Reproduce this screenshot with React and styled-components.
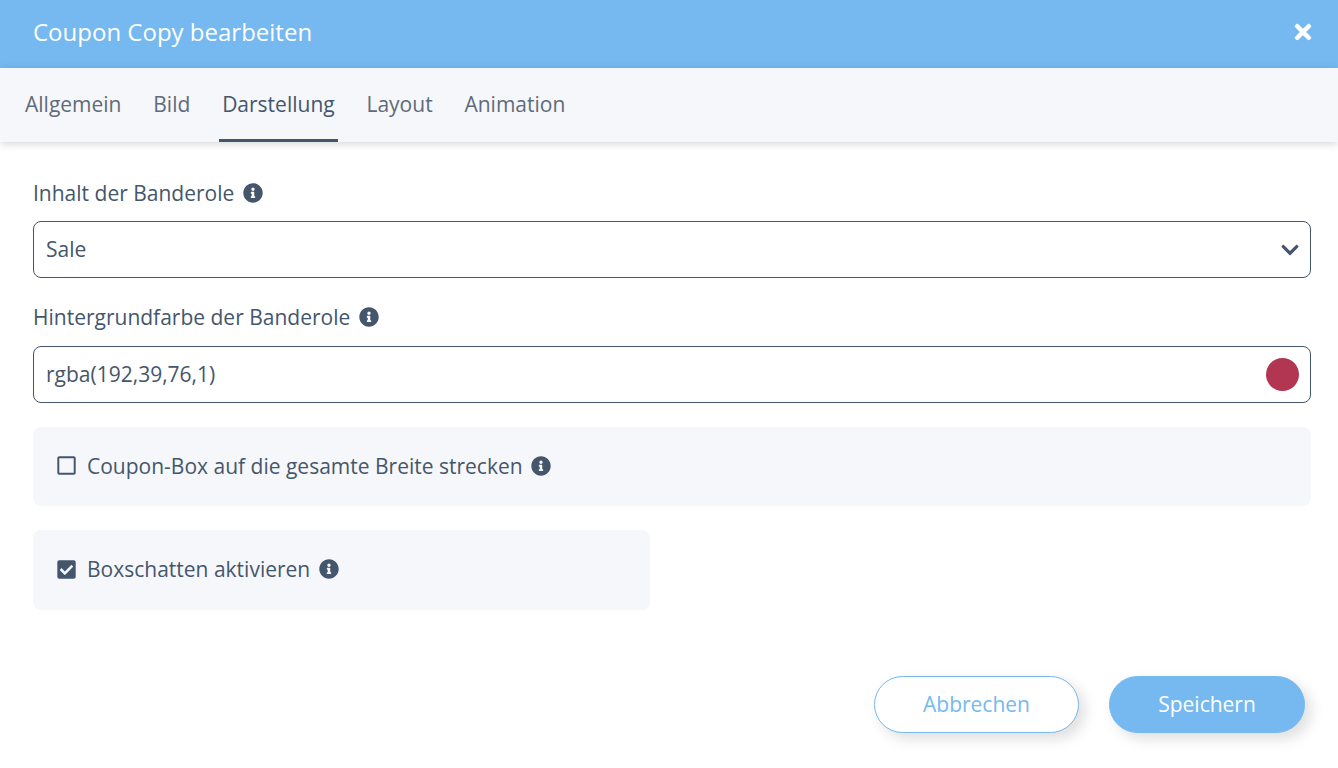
import React from "react";
import styled, { createGlobalStyle } from "styled-components";
import { FaInfoCircle, FaChevronDown, FaTimes, FaCheckSquare, FaRegSquare } from "react-icons/fa";

const Global = createGlobalStyle`
  html, body { margin: 0; padding: 0; background: #fff; }
  body { font-family: "Open Sans", "Liberation Sans", sans-serif; color: #44566c; }
`;
const Page = styled.div`
  width: 1338px; height: 768px; overflow: hidden; display: flex; flex-direction: column; background: #fff;
`;
const Header = styled.header`
  height: 68px; flex: none; background: #75b9f0; color: #fff;
  display: flex; align-items: center; justify-content: space-between;
  padding: 0 23px 4px 33px; box-sizing: border-box;
  font-size: 24px; line-height: 30px;
`;
const Close = styled.span`display: flex; font-size: 24px; color: #fff;`;
const Tabs = styled.nav`
  height: 74px; flex: none; background: #f6f7fb; display: flex; gap: 25.8px; padding-left: 22px;
  box-shadow: 0 2px 8px rgba(0,0,0,.16); box-sizing: border-box; position: relative;
`;
const Tab = styled.div`
  padding: 0 3px; display: flex; align-items: center; font-size: 21px; height: 74px; box-sizing: border-box;
  color: ${p => p.$active ? "#44566c" : "#5e6b79"};
  border-bottom: 3px solid ${p => p.$active ? "#44566c" : "transparent"};
`;
const Body = styled.main`
  flex: 1; display: flex; flex-direction: column; padding: 37px 27px 0 33px;
`;
const Label = styled.div`
  display: flex; align-items: center; gap: 9px; font-size: 21px; line-height: 28px; height: 28px;
  margin-bottom: ${p => p.$mb}px;
`;
const Info = styled(FaInfoCircle)`font-size: 20px; color: #44566c; flex: none;`;
const Field = styled.div`
  height: 57px; box-sizing: border-box; border: 1px solid #44566c; border-radius: 8px;
  display: flex; align-items: center; justify-content: space-between;
  padding: 0 11px 0 12px; font-size: 21px; margin-bottom: ${p => p.$mb}px;
`;
const FieldText = styled.span`padding-bottom: 2px;`;
const Swatch = styled.span`width: 33px; height: 33px; border-radius: 50%; background: #b23651; flex: none;`;
const Chevron = styled(FaChevronDown)`font-size: 20px; color: #44566c; margin-right: -1px;`;
const CheckPanel = styled.div`
  height: ${p => p.$h}px; width: ${p => p.$w}; box-sizing: border-box; background: #f6f7fb; border-radius: 8px;
  display: flex; align-items: center; gap: 8.5px; padding: 0 24px 2px; font-size: 21px; margin-bottom: 24px;
`;
const Box = styled.span`display: flex; font-size: 21px; color: #44566c; width: 19px; justify-content: center; flex: none; margin-right: 2.5px;`;
const Footer = styled.footer`
  display: flex; justify-content: flex-end; gap: 30px; margin-top: 42px; padding-right: 6px;
`;
const Button = styled.div`
  height: 57px; width: ${p => p.$w}px; box-sizing: border-box; border-radius: 29px; padding-bottom: 2px;
  display: flex; align-items: center; justify-content: center; font-size: 21px;
  border: 1px solid #75b9f0;
  background: ${p => p.$primary ? "#75b9f0" : "#fff"};
  color: ${p => p.$primary ? "#fff" : "#75b9f0"};
  box-shadow: 6px 6px 14px rgba(0,0,0,.13);
`;

export default function App() {
  return (
    <Page>
      <Global />
      <Header>
        <span>Coupon Copy bearbeiten</span>
        <Close><FaTimes /></Close>
      </Header>
      <Tabs>
        <Tab>Allgemein</Tab>
        <Tab>Bild</Tab>
        <Tab $active>Darstellung</Tab>
        <Tab>Layout</Tab>
        <Tab>Animation</Tab>
      </Tabs>
      <Body>
        <Label $mb={14}>Inhalt der Banderole <Info /></Label>
        <Field $mb={25}><FieldText>Sale</FieldText> <Chevron /></Field>
        <Label $mb={15}>Hintergrundfarbe der Banderole <Info /></Label>
        <Field $mb={24}><FieldText>rgba(192,39,76,1)</FieldText> <Swatch /></Field>
        <CheckPanel $h={79} $w="100%"><Box><FaRegSquare /></Box>Coupon-Box auf die gesamte Breite strecken <Info /></CheckPanel>
        <CheckPanel $h={80} $w="617px"><Box><FaCheckSquare /></Box>Boxschatten aktivieren <Info /></CheckPanel>
        <Footer>
          <Button $w={205}>Abbrechen</Button>
          <Button $w={196} $primary>Speichern</Button>
        </Footer>
      </Body>
    </Page>
  );
}
